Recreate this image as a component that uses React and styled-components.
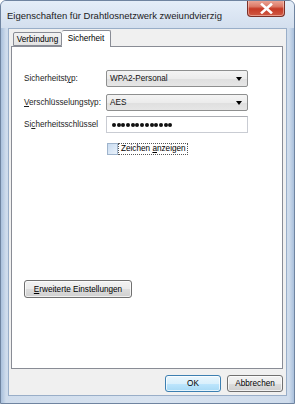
import React from "react";
import styled, { createGlobalStyle } from "styled-components";

const Global = createGlobalStyle`
  html, body { margin: 0; padding: 0; background: #fff; }
  body { font-family: "Liberation Sans", Arial, sans-serif; }
`;

const KEY_LENGTH = 13;

export default function App() {
  return (
    <>
      <Global />
      <Window>
        <TitleBar>
          <Title>Eigenschaften für Drahtlosnetzwerk zweiundvierzig</Title>
          <CloseBtn>
            <svg width="13" height="11" viewBox="0 0 13 11">
              <path d="M2 1.5 L11 9.5 M11 1.5 L2 9.5" stroke="#fff" strokeWidth="2.6" strokeLinecap="square" />
            </svg>
          </CloseBtn>
        </TitleBar>
        <Client>
          <TabStrip>
            <Tab>Verbindung</Tab>
            <Tab $active>Sicherheit</Tab>
          </TabStrip>
          <Panel>
            <Row $gap={7}>
              <Label>Sicherheitst<u>y</u>p:</Label>
              <Combo>
                <span>WPA2-Personal</span>
                <Arrow />
              </Combo>
            </Row>
            <Row $gap={5}>
              <Label><u>V</u>erschlüsselungstyp:</Label>
              <Combo>
                <span>AES</span>
                <Arrow />
              </Combo>
            </Row>
            <Row $gap={10}>
              <Label>Si<u>c</u>herheitsschlüssel</Label>
              <TextField>
                {Array.from({ length: KEY_LENGTH }).map((_, i) => (
                  <Dot key={i} />
                ))}
              </TextField>
            </Row>
            <CheckRow>
              <CheckBox />
              <Focus>Zeichen <u>a</u>nzeigen</Focus>
            </CheckRow>
            <AdvancedBtn><u>E</u>rweiterte Einstellungen</AdvancedBtn>
          </Panel>
          <ButtonRow>
            <DlgButton $default>OK</DlgButton>
            <DlgButton>Abbrechen</DlgButton>
          </ButtonRow>
        </Client>
      </Window>
    </>
  );
}

const Window = styled.div`
  width: 295px;
  height: 404px;
  box-sizing: border-box;
  display: flex;
  flex-direction: column;
  border: 1px solid #6f84a0;
  border-radius: 6px 6px 0 0;
  background: linear-gradient(to right, #a9c0dc 0px, #cfdcec 5px, #d8e3f0 50%, #cfdcec calc(100% - 5px), #a9c0dc 100%);
  overflow: hidden;
`;

const TitleBar = styled.div`
  height: 27px;
  display: flex;
  align-items: flex-start;
  justify-content: space-between;
  padding: 0 9px 0 6px;
  background: linear-gradient(#e4edf8, #d3dfee);
`;

const Title = styled.div`
  font-family: "Liberation Sans", Arial, sans-serif;
  font-size: 9.5px;
  color: #1b1b1b;
  padding-top: 9px;
  white-space: nowrap;
`;

const CloseBtn = styled.div`
  width: 38px;
  height: 17px;
  margin-top: -1px;
  box-sizing: border-box;
  border: 1px solid #7a3028;
  border-top: none;
  border-radius: 0 0 4px 4px;
  background: linear-gradient(#eeaa9c 0%, #dc7a68 40%, #c63a26 55%, #cf5a45 100%);
  box-shadow: inset 0 0 0 1px rgba(255, 220, 210, 0.5);
  display: flex;
  align-items: center;
  justify-content: center;
`;

const Client = styled.div`
  flex: 1;
  margin: 0 7px 7px 7px;
  background: #f0f0f0;
  border: 1px solid #99aec8;
  display: flex;
  flex-direction: column;
  padding: 1px 3px 3px 2px;
`;

const TabStrip = styled.div`
  display: flex;
  align-items: flex-end;
  padding-left: 2px;
  height: 16px;
  position: relative;
  z-index: 1;
`;

const Tab = styled.div`
  font-size: 8.2px;
  color: #000;
  box-sizing: border-box;
  width: 49px;
  text-align: center;
  height: ${(p) => (p.$active ? "17px" : "14px")};
  margin-bottom: ${(p) => (p.$active ? "-1px" : "0")};
  padding-top: ${(p) => (p.$active ? "3px" : "2px")};
  border: 1px solid #898c95;
  border-bottom: ${(p) => (p.$active ? "none" : "1px solid #898c95")};
  border-left: ${(p) => (p.$active ? "none" : "1px solid #898c95")};
  background: ${(p) => (p.$active ? "#fff" : "linear-gradient(#f2f2f2, #e3e3e3)")};
  border-radius: 2px 2px 0 0;
`;

const Panel = styled.div`
  flex: 1;
  background: #fff;
  border: 1px solid #898c95;
  display: flex;
  flex-direction: column;
  padding: 23px 0 0 12px;
`;

const Row = styled.div`
  display: flex;
  align-items: center;
  margin-bottom: ${(p) => p.$gap}px;
`;

const Label = styled.div`
  width: 82px;
  font-size: 8.2px;
  color: #1e1e1e;
`;

const Combo = styled.div`
  width: 142px;
  height: 17px;
  box-sizing: border-box;
  border: 1px solid #8e8f8f;
  border-radius: 2px;
  background: linear-gradient(#f4f4f4 0%, #ececec 50%, #dfdfdf 51%, #e6e6e6 100%);
  display: flex;
  align-items: center;
  justify-content: space-between;
  padding: 0 5px 0 3px;
  font-size: 8.2px;
  color: #111;
`;

const Arrow = styled.span`
  width: 0;
  height: 0;
  border-left: 3.5px solid transparent;
  border-right: 3.5px solid transparent;
  border-top: 4px solid #000;
`;

const TextField = styled.div`
  width: 142px;
  height: 17px;
  box-sizing: border-box;
  border: 1px solid #c9ccd3;
  border-top-color: #abadb3;
  background: #fff;
  display: flex;
  align-items: center;
  gap: 0.7px;
  padding-left: 5px;
`;

const Dot = styled.span`
  width: 4px;
  height: 4px;
  border-radius: 50%;
  background: #111;
`;

const CheckRow = styled.div`
  display: flex;
  align-items: center;
  margin-left: 83px;
`;

const CheckBox = styled.span`
  width: 9px;
  height: 10px;
  border: 1px solid #9fb4cc;
  background: linear-gradient(135deg, #c9dcf1, #eaf2fb);
`;

const Focus = styled.span`
  font-size: 8.2px;
  color: #000;
  border: 1px dotted #555;
  padding: 0 1px 1px 2px;
`;

const ButtonBase = styled.div`
  height: 18px;
  box-sizing: border-box;
  border: 1px solid #707070;
  border-radius: 3px;
  background: linear-gradient(#f2f2f2 0%, #ebebeb 50%, #dddddd 51%, #cfcfcf 100%);
  box-shadow: inset 0 0 0 1px rgba(255, 255, 255, 0.7);
  display: flex;
  align-items: center;
  justify-content: center;
  font-size: 8.2px;
  color: #000;
`;

const AdvancedBtn = styled(ButtonBase)`
  width: 108px;
  margin-top: 125px;
`;

const ButtonRow = styled.div`
  display: flex;
  justify-content: flex-end;
  gap: 6px;
  padding-top: 6px;
`;

const DlgButton = styled(ButtonBase)`
  width: 56px;
  height: 17px;
  border-color: ${(p) => (p.$default ? "#3c7fb1" : "#707070")};
  background: ${(p) =>
    p.$default
      ? "linear-gradient(#eaf6fd 0%, #d9f0fc 50%, #bee6fd 51%, #a7d9f5 100%)"
      : "linear-gradient(#f2f2f2 0%, #ebebeb 50%, #dddddd 51%, #cfcfcf 100%)"};
`;
